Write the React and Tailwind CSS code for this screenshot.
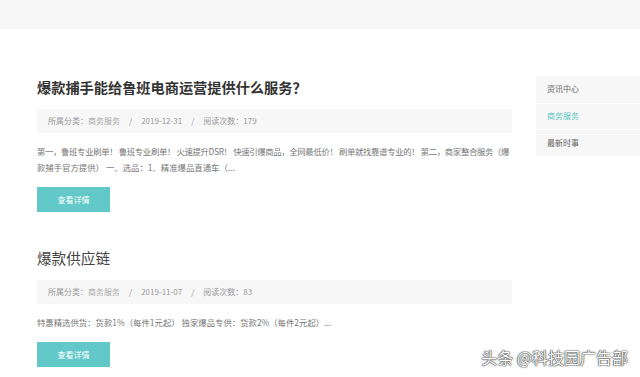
import React from 'react';

const posts = [
  {
    title: '爆款捕手能给鲁班电商运营提供什么服务？',
    bold: true,
    date: '2019-12-31',
    views: 179,
    lines: [
      '第一，鲁班专业刷单！ 鲁班专业刷单！ 火速提升DSR！ 快速引爆商品，全网最低价！ 刷单就找靠谱专业的！ 第二，商家整合服务（爆',
      '款捕手官方提供） 一、选品：1、精准爆品直通车（...',
    ],
  },
  {
    title: '爆款供应链',
    bold: false,
    date: '2019-11-07',
    views: 83,
    lines: ['特惠精选供货：货款1%（每件1元起） 独家爆品专供：货款2%（每件2元起）...'],
  },
];

const menu = ['资讯中心', '商务服务', '最新时事'];

const font = { fontFamily: '"Noto Sans CJK SC", "Noto Sans", sans-serif' };

const Post = ({ post }) => (
  <div className="mb-[34px]">
    <h2
      className={`leading-[24px] ${post.bold ? 'text-[14.2px] font-bold text-[#333]' : 'text-[14.6px] font-normal text-[#444]'}`}
    >
      {post.title}
    </h2>
    <div className="mt-[10px] h-[24px] bg-[#f7f7f7] pl-[11px] flex items-center text-[8px] text-[#999] gap-[6px]">
      <span>
        所属分类：<span className="text-[#aaa]">商务服务</span>
      </span>
      <span className="px-[3px]">/</span>
      <span>{post.date}</span>
      <span className="px-[3px]">/</span>
      <span>阅读次数：{post.views}</span>
    </div>
    <div className="mt-[10px] text-[8.4px] leading-[16px] text-[#777] whitespace-nowrap">
      {post.lines.map((l, i) => (
        <p key={i} className={post.lines.length > 1 && i === 0 ? 'tracking-[-0.35px]' : ''}>
          {l}
        </p>
      ))}
    </div>
    <button className="mt-[12px] w-[73px] h-[25px] bg-[#62c9c8] text-white text-[8px]">
      查看详情
    </button>
  </div>
);

export default function App() {
  return (
    <div className="w-[640px] h-[377px] overflow-hidden bg-white relative" style={font}>
      <div className="h-[29px] bg-[#f6f6f6]" />
      <div className="flex pl-[37px] pt-[46px]">
        <div className="w-[475px] overflow-hidden">
          {posts.map((p, i) => (
            <Post key={i} post={p} />
          ))}
        </div>
        <div className="ml-[24px] w-[104px] mt-[1px] self-start bg-[#f7f7f7]">
          {menu.map((m, i) => (
            <div
              key={m}
              className={`h-[26.5px] flex items-center pl-[11px] text-[8px] leading-none ${
                i > 0 ? 'border-t border-white' : ''
              } ${i === 1 ? 'text-[#5bc4c3]' : 'text-[#666]'}`}
            >
              {m}
            </div>
          ))}
        </div>
      </div>
      <div
        className="absolute right-[12px] bottom-[12px] text-[16px] text-white leading-none"
        style={{ textShadow: '0 0 1px #333, 0 0 1px #333, 0 0 2px #555' }}
      >
        头条 @科技园广告部
      </div>
    </div>
  );
}
